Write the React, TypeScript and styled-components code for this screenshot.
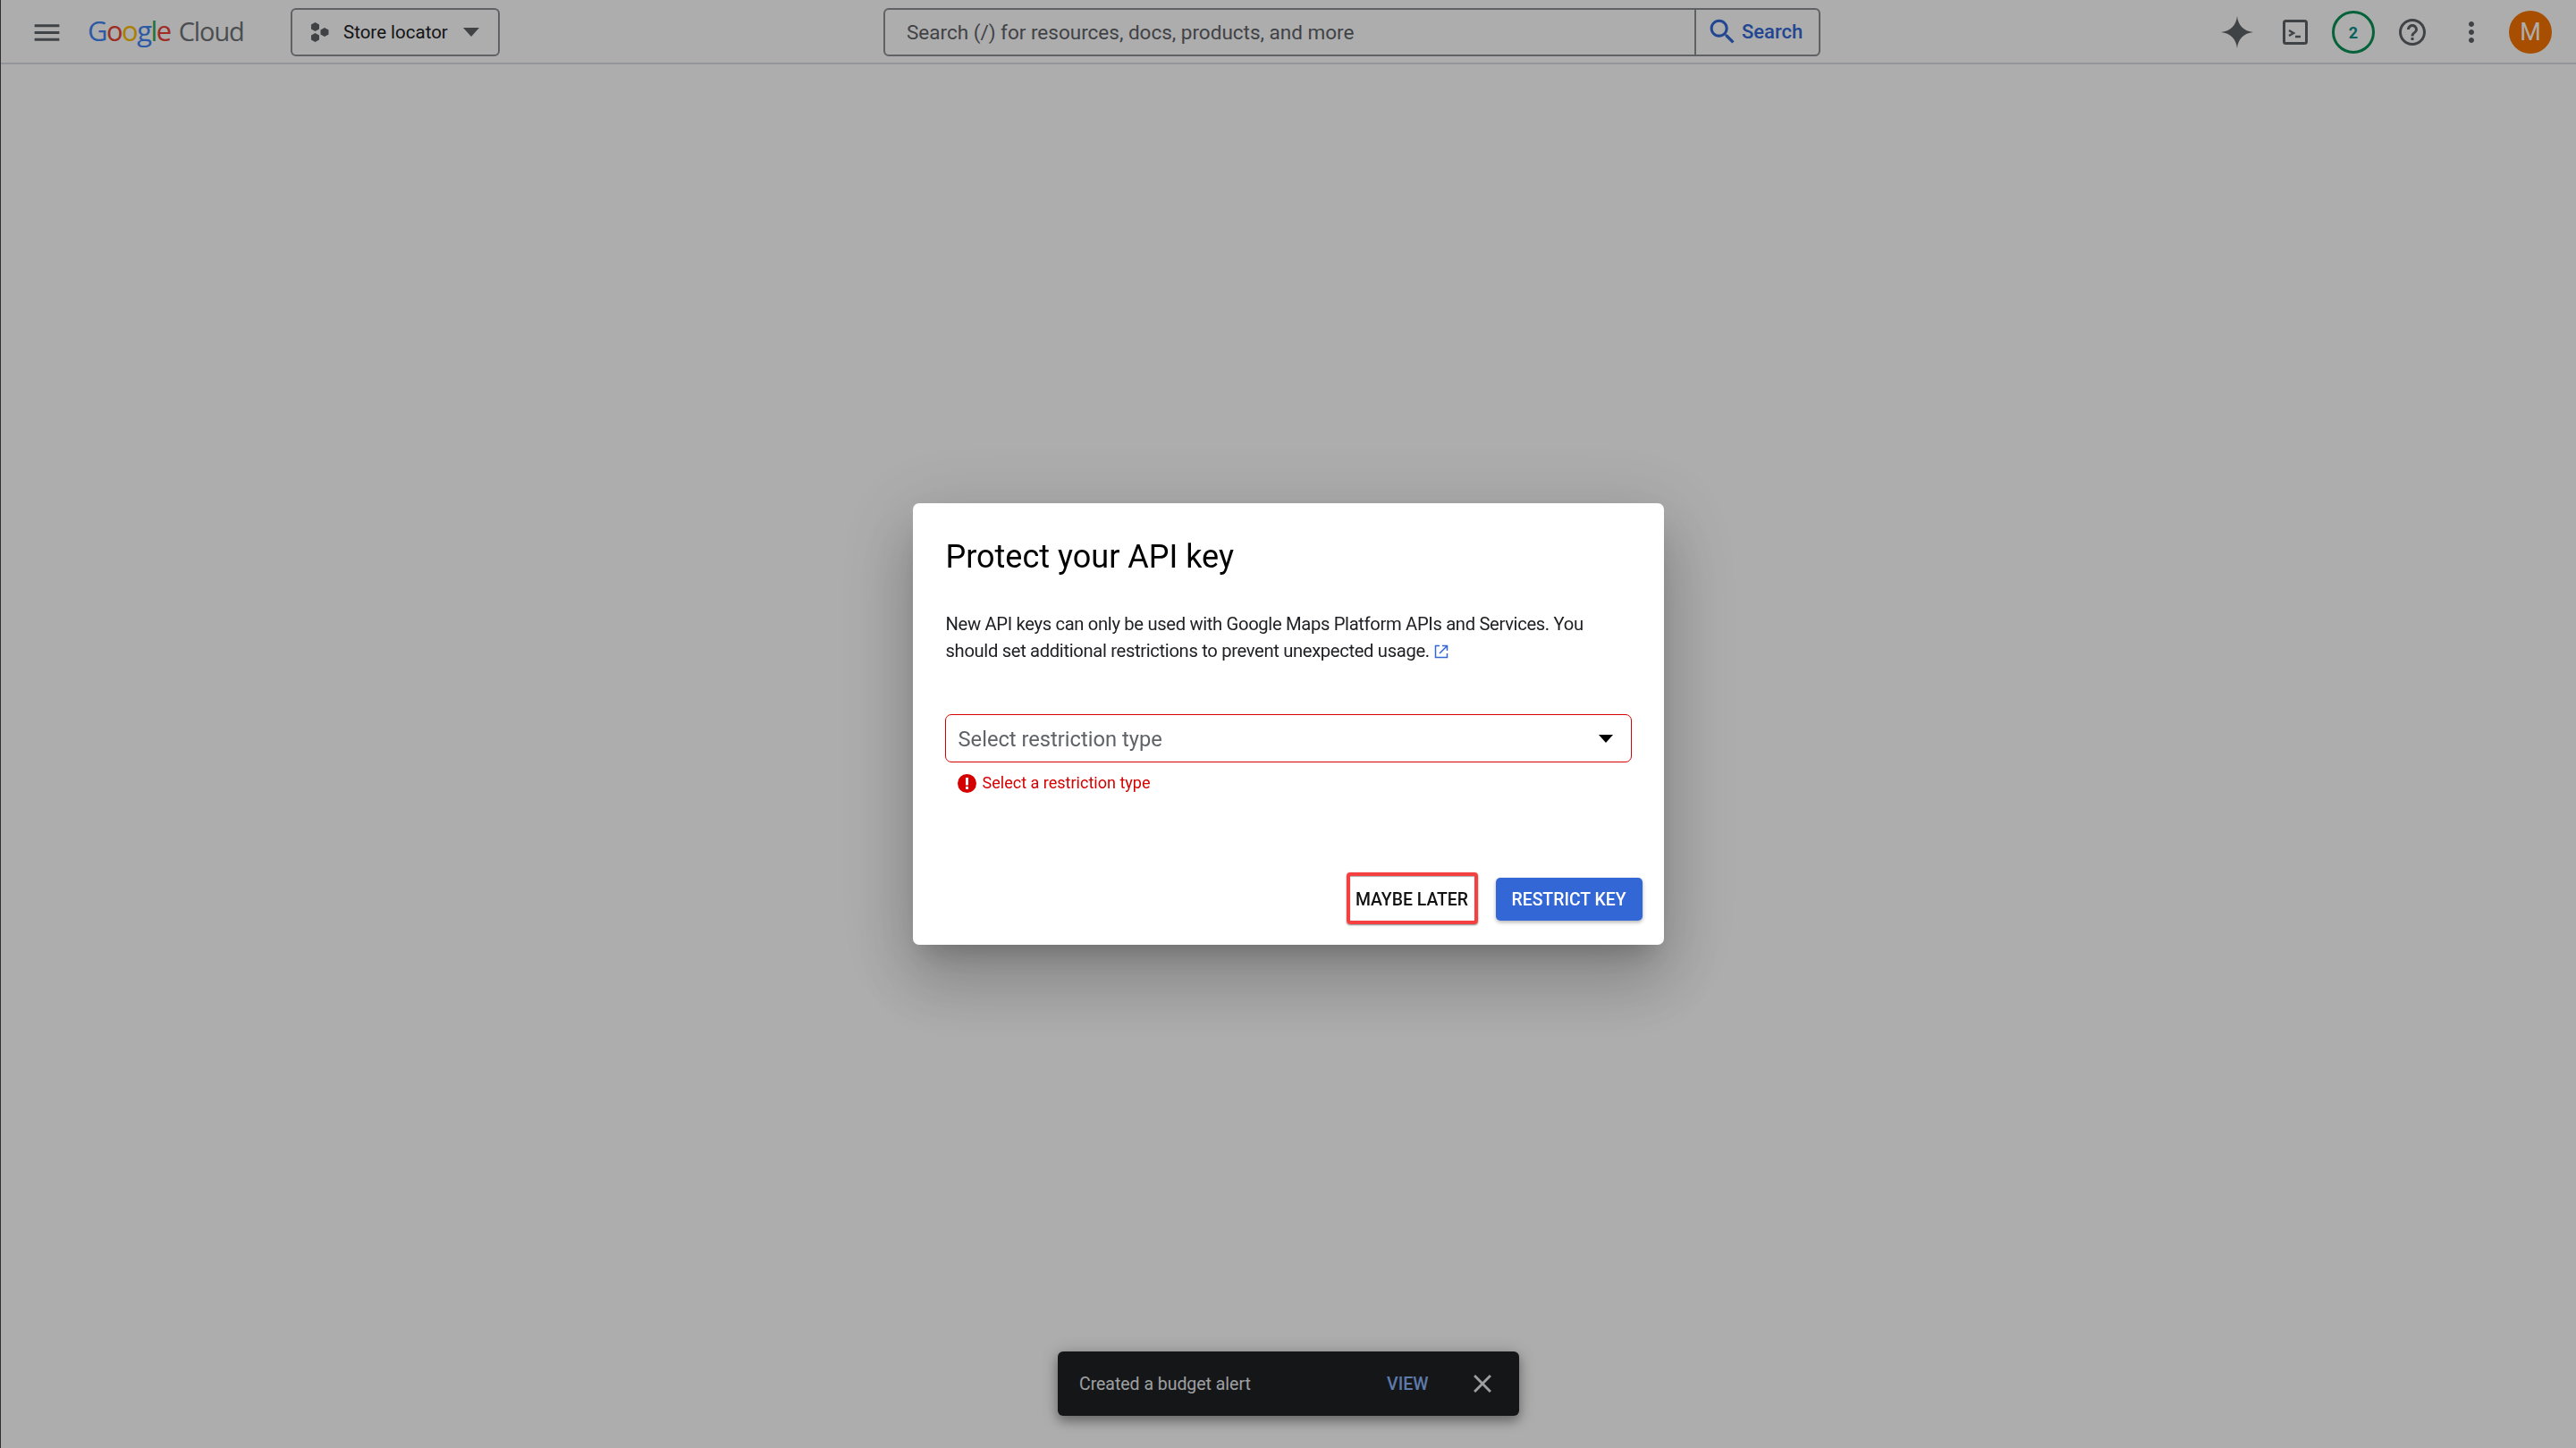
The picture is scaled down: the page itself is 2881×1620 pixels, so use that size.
import React from 'react';
import styled, { createGlobalStyle } from 'styled-components';

const Global = createGlobalStyle`
  html, body { margin: 0; padding: 0; background: #fff; }
  body { font-family: Roboto, "Liberation Sans", sans-serif; color: #202124; }
  * { box-sizing: border-box; }
`;

const Page = styled.div`
  position: relative;
  height: 100vh;
  overflow: hidden;
  border-left: 1px solid #474747;
  display: flex;
  flex-direction: column;
`;

const Header = styled.header`
  height: 72px;
  flex: none;
  display: flex;
  align-items: center;
  padding-top: 2px;
  border-bottom: 2px solid #dadce0;
`;

const MenuSlot = styled.div`
  width: 97px;
  padding-left: 33px;
  display: flex;
  align-items: center;
`;

const Logo = styled.div`
  width: 227px;
  padding-bottom: 3px;
  font-size: 31px;
  font-family: "Open Sans", Roboto, sans-serif;
  letter-spacing: -1.55px;
  white-space: nowrap;
  line-height: 40px;
`;

const LogoLetter = styled.span<{ $c: string }>`
  color: ${p => p.$c};
`;

const CloudWord = styled.span`
  color: #6e7378;
  margin-left: 9px;
  font-size: 29px;
  letter-spacing: -1.1px;
`;

const ProjectButton = styled.div`
  width: 234px;
  height: 54px;
  border: 2px solid #8c8f94;
  border-radius: 6px;
  display: flex;
  align-items: center;
  padding-left: 20px;
  color: #202124;
  font-size: 20.5px;
  white-space: nowrap;
`;

const ProjectLabel = styled.span`
  margin-left: 15px;
  padding-bottom: 1px;
  width: 133px;
`;

const SearchBox = styled.div`
  margin-left: 429px;
  width: 1048px;
  height: 54px;
  border: 2px solid #8c8f94;
  border-radius: 6px;
  display: flex;
  align-items: stretch;
`;

const SearchText = styled.div`
  flex: 1;
  display: flex;
  align-items: center;
  padding: 0 0 1px 24px;
  font-size: 22.5px;
  color: #5f6368;
  white-space: nowrap;
`;

const SearchAction = styled.div`
  width: 139px;
  border-left: 2px solid #8c8f94;
  display: flex;
  align-items: center;
  padding: 0 0 1px 11px;
  gap: 3px;
  color: #3367d6;
  font-size: 22px;
  font-weight: 500;
`;

const Tools = styled.div`
  margin-left: 8px;
  flex: 1;
  display: flex;
  align-items: center;
  height: 100%;
  padding-left: 425px;
`;

const ToolSlot = styled.div<{ $w: number }>`
  width: ${p => p.$w}px;
  flex: none;
  display: flex;
  align-items: center;
  justify-content: center;
`;

const Badge = styled.div`
  width: 48px;
  height: 48px;
  border-radius: 50%;
  border: 3.5px solid #089155;
  color: #0a8f8a;
  font-size: 18px;
  font-weight: 700;
  display: flex;
  align-items: center;
  justify-content: center;
`;

const Avatar = styled.div`
  width: 48px;
  height: 48px;
  border-radius: 50%;
  background: #f77400;
  color: #fff;
  font-size: 27px;
  display: flex;
  align-items: center;
  justify-content: center;
`;

const Toast = styled.div`
  position: absolute;
  left: 1182px;
  top: 1512px;
  width: 516px;
  height: 72px;
  border-radius: 6px;
  background: #202124;
  color: #e8eaed;
  display: flex;
  align-items: center;
  padding-left: 24px;
  font-size: 19.45px;
  box-shadow: 0 6px 12px rgba(0,0,0,.3), 0 2px 20px rgba(0,0,0,.2);
`;

const ToastText = styled.span`
  width: 344px;
  white-space: nowrap;
`;

const ToastAction = styled.span`
  width: 90px;
  color: #8ab4f8;
  font-size: 19.6px;
  font-weight: 500;
`;

const Overlay = styled.div`
  position: fixed;
  inset: 0;
  background: rgba(0,0,0,.32);
  display: flex;
  align-items: center;
  justify-content: center;
`;

const Dialog = styled.div`
  width: 840px;
  height: 494px;
  background: #fff;
  border-radius: 7px;
  padding: 39px 24px 0 36px;
  display: flex;
  flex-direction: column;
  box-shadow: 0 20px 28px -13px rgba(0,0,0,.2), 0 44px 70px 6px rgba(0,0,0,.14), 0 17px 85px 15px rgba(0,0,0,.12);
`;

const Title = styled.h2`
  margin: 0 0 0 1px;
  font-size: 36px;
  line-height: 43px;
  font-weight: 400;
  color: #000;
`;

const Body = styled.p`
  margin: 38px 0 0 1px;
  width: 768px;
  font-size: 20.2px;
  letter-spacing: -0.33px;
  line-height: 30px;
  color: #202124;
`;

const ExternalIcon = styled.svg`
  display: inline-block;
  vertical-align: -2px;
  margin-left: 5px;
`;

const SelectField = styled.div`
  margin-top: 56px;
  width: 768px;
  height: 54px;
  border: 1.5px solid #d50000;
  border-radius: 7px;
  display: flex;
  align-items: center;
  justify-content: space-between;
  padding: 1px 20px 0 14px;
  font-size: 23.7px;
  color: #5f6368;
`;

const ErrorRow = styled.div`
  margin: 12px 0 0 14px;
  display: flex;
  align-items: center;
  gap: 7px;
  font-size: 18.05px;
  line-height: 22px;
  color: #d50000;
`;

const Actions = styled.div`
  margin-top: auto;
  margin-bottom: 21px;
  display: flex;
  justify-content: flex-end;
  align-items: center;
  gap: 20px;
`;

const LaterButton = styled.div`
  width: 147px;
  height: 58px;
  margin-bottom: 2px;
  padding-top: 2px;
  border: 4px solid #f44040;
  border-radius: 4px;
  box-shadow: 0 1px 2px rgba(0,0,0,.5), inset 0 1px 1px rgba(0,0,0,.35);
  display: flex;
  align-items: center;
  justify-content: center;
  font-size: 19.4px;
  font-weight: 500;
  color: #111;
  white-space: nowrap;
`;

const RestrictButton = styled.div`
  width: 164px;
  height: 48px;
  background: #3367d6;
  border-radius: 5px;
  box-shadow: 0 2px 4px rgba(0,0,0,.3);
  display: flex;
  align-items: center;
  justify-content: center;
  font-size: 19.4px;
  font-weight: 500;
  color: #fff;
  white-space: nowrap;
`;

const Icon = ({ d, size, color }: { d: string; size: number; color: string }) => (
  <svg width={size} height={size} viewBox="0 0 24 24" fill={color}><path d={d} /></svg>
);

const logo: [string, string][] = [
  ['G', '#4285f4'], ['o', '#ea4335'], ['o', '#fbbc04'], ['g', '#4285f4'], ['l', '#34a853'], ['e', '#ea4335'],
];

export default function App() {
  return (
    <>
      <Global />
      <Page>
        <Header>
          <MenuSlot>
            <Icon size={37} color="#5f6368" d="M3 18h18v-2H3v2zm0-5h18v-2H3v2zm0-7v2h18V6H3z" />
          </MenuSlot>
          <Logo>
            {logo.map(([l, c], i) => <LogoLetter key={i} $c={c}>{l}</LogoLetter>)}
            <CloudWord>Cloud</CloudWord>
          </Logo>
          <ProjectButton>
            <svg width="22" height="24" viewBox="0 0 22 24" fill="#5f6368">
              <path d="M5.5 1l4.5 2.5v5L5.5 11 1 8.500v-5z" />
              <path d="M5.500 13l4.500 2.500v5L5.500 23 1 20.500v-5z" />
              <path d="M16 7l4.500 2.500v5L16 17l-4.500-2.500v-5z" />
            </svg>
            <ProjectLabel>Store locator</ProjectLabel>
            <svg width="20" height="10" viewBox="0 0 20 10" fill="#5f6368"><path d="M1 0h18l-9 10z" /></svg>
          </ProjectButton>
          <SearchBox>
            <SearchText>Search (/) for resources, docs, products, and more</SearchText>
            <SearchAction>
              <Icon size={37} color="#3367d6" d="M15.5 14h-.79l-.28-.27C15.41 12.59 16 11.11 16 9.5 16 5.91 13.09 3 9.5 3S3 5.910 3 9.500 5.910 16 9.500 16c1.610 0 3.090-.590 4.230-1.570l.270.280v.790l5 4.990L20.490 19l-4.990-5zm-6 0C7.010 14 5 11.990 5 9.500S7.010 5 9.500 5 14 7.010 14 9.500 11.990 14 9.500 14z" />
              Search
            </SearchAction>
          </SearchBox>
          <Tools>
            <ToolSlot $w={66}>
              <Icon size={36} color="#5f6368" d="M12 0C12.700 7 17 11.300 24 12 17 12.700 12.700 17 12 24 11.300 17 7 12.700 0 12 7 11.300 11.300 7 12 0z" />
            </ToolSlot>
            <ToolSlot $w={64}>
              <svg width="28" height="28" viewBox="0 0 28 28" fill="none" stroke="#5f6368">
                <rect x="1.500" y="1.500" width="25" height="25" rx="2" strokeWidth="3" />
                <path d="M7 12l5 3-5 3" strokeWidth="2.500" />
                <path d="M14 19h6" strokeWidth="2.500" />
              </svg>
            </ToolSlot>
            <ToolSlot $w={66}>
              <Badge>2</Badge>
            </ToolSlot>
            <ToolSlot $w={66}>
              <Icon size={36} color="#5f6368" d="M11 18h2v-2h-2v2zm1-16C6.480 2 2 6.480 2 12s4.480 10 10 10 10-4.480 10-10S17.520 2 12 2zm0 18c-4.410 0-8-3.590-8-8s3.590-8 8-8 8 3.590 8 8-3.590 8-8 8zm0-14c-2.210 0-4 1.790-4 4h2c0-1.100.9-2 2-2s2 .9 2 2c0 2-3 1.750-3 5h2c0-2.250 3-2.500 3-5 0-2.210-1.790-4-4-4z" />
            </ToolSlot>
            <ToolSlot $w={66}>
              <Icon size={36} color="#5f6368" d="M12 8c1.100 0 2-.9 2-2s-.9-2-2-2-2 .9-2 2 .9 2 2 2zm0 2c-1.100 0-2 .9-2 2s.9 2 2 2 2-.9 2-2-.9-2-2-2zm0 6c-1.100 0-2 .9-2 2s.9 2 2 2 2-.9 2-2-.9-2-2-2z" />
            </ToolSlot>
            <ToolSlot $w={66}>
              <Avatar>M</Avatar>
            </ToolSlot>
          </Tools>
        </Header>
        <Toast>
          <ToastText>Created a budget alert</ToastText>
          <ToastAction>VIEW</ToastAction>
          <Icon size={34} color="#e8eaed" d="M19 6.410L17.590 5 12 10.590 6.410 5 5 6.410 10.590 12 5 17.590 6.410 19 12 13.410 17.590 19 19 17.590 13.410 12z" />
        </Toast>
      </Page>
      <Overlay>
        <Dialog>
          <Title>Protect your API key</Title>
          <Body>
            New API keys can only be used with Google Maps Platform APIs and Services. You should set additional restrictions to prevent unexpected usage.
            <ExternalIcon width="16" height="16" viewBox="0 0 16 16" fill="none" stroke="#3367d6" strokeWidth="1.500">
              <path d="M6 1.500H1.500v13h13V10" />
              <path d="M9 1.500h5.500V7M14.500 1.500L6 10" />
            </ExternalIcon>
          </Body>
          <SelectField>
            Select restriction type
            <svg width="16" height="9" viewBox="0 0 16 9" fill="#000"><path d="M0 0h16l-8 9z" /></svg>
          </SelectField>
          <ErrorRow>
            <svg width="21" height="21" viewBox="0 0 21 21">
              <circle cx="10.500" cy="10.500" r="10.500" fill="#d50000" />
              <rect x="9" y="4" width="3" height="8.500" fill="#fff" />
              <rect x="9" y="14" width="3" height="3" fill="#fff" />
            </svg>
            Select a restriction type
          </ErrorRow>
          <Actions>
            <LaterButton>MAYBE LATER</LaterButton>
            <RestrictButton>RESTRICT KEY</RestrictButton>
          </Actions>
        </Dialog>
      </Overlay>
    </>
  );
}
